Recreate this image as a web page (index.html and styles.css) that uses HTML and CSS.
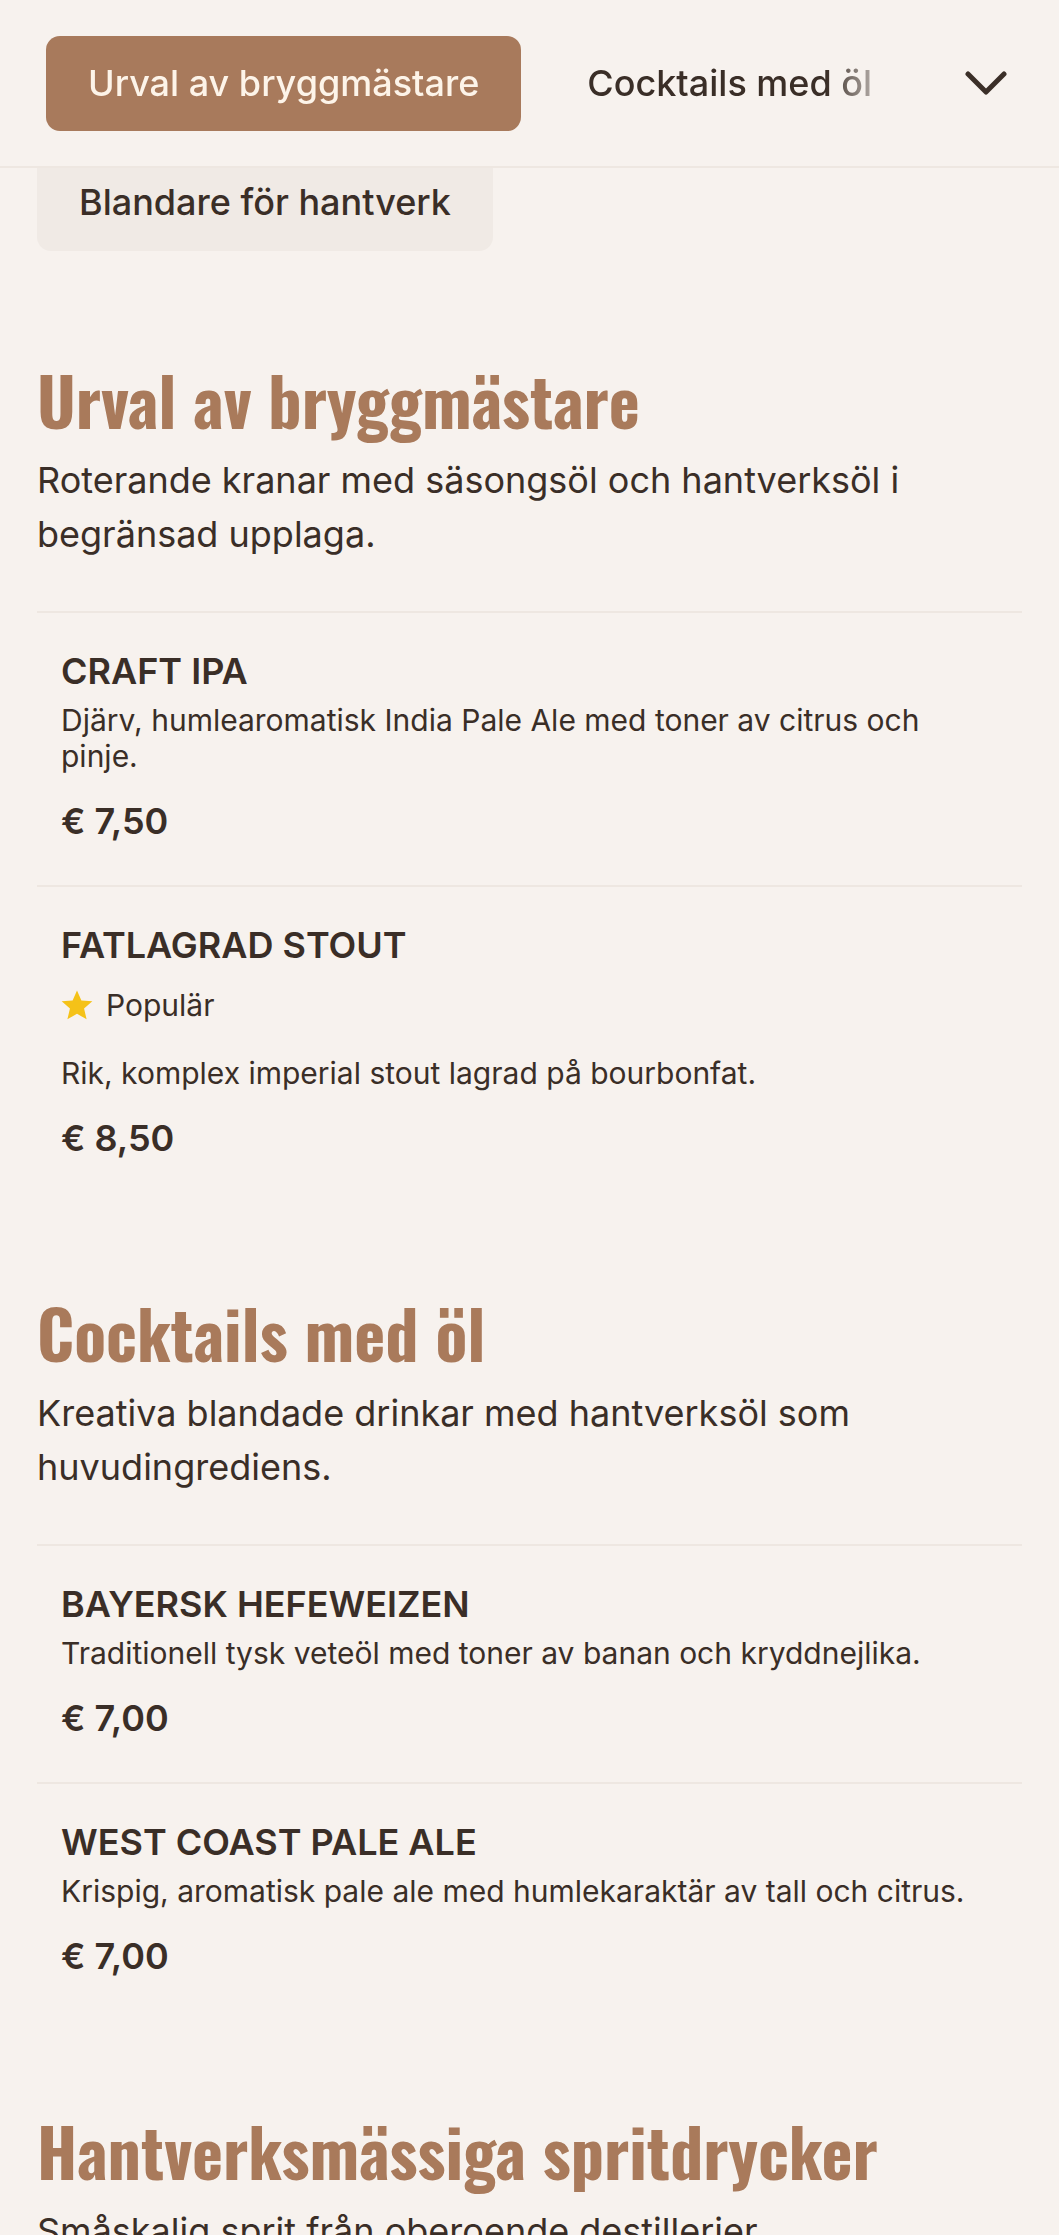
FILE: index.html
```html
<!DOCTYPE html>
<html lang="sv">
<head>
<meta charset="utf-8">
<title>Meny</title>
<link rel="stylesheet" href="styles.css">
</head>
<body>
<header class="topbar">
  <nav class="tabs">
    <a class="tab tab-active">Urval av bryggmästare</a>
    <a class="tab">Cocktails med öl</a>
    <a class="tab">Blandare för hantverk</a>
    <a class="tab">Hantverksmässiga spritdrycker</a>
  </nav>
  <button class="toggle" aria-label="Visa alla kategorier">
    <svg width="42" height="24" viewBox="0 0 42 24"><polyline points="3,3 21,21 39,3" fill="none" stroke="#3b2f28" stroke-width="5" stroke-linecap="round" stroke-linejoin="round"/></svg>
  </button>
</header>
<div class="chiprow">
  <span class="chip">Blandare för hantverk</span>
</div>
<main class="menu">
  <section class="category first">
    <h2 class="cat-title">Urval av bryggmästare</h2>
    <p class="cat-desc">Roterande kranar med säsongsöl och hantverksöl i begränsad upplaga.</p>
    <div class="items">
      <article class="item">
        <h3 class="item-name">CRAFT IPA</h3>
        <p class="item-desc">Djärv, humlearomatisk India Pale Ale med toner av citrus och pinje.</p>
        <p class="item-price">€ 7,50</p>
      </article>
      <article class="item">
        <h3 class="item-name">FATLAGRAD STOUT</h3>
        <div class="badge">
          <svg class="star" width="32" height="31" viewBox="0 0 24 23"><polygon points="12,0.3 15.3,7.7 23.5,8.4 17.3,13.8 19.2,21.9 12,17.6 4.8,21.9 6.7,13.8 0.5,8.4 8.7,7.7" fill="#f5c218"/></svg>
          <span>Populär</span>
        </div>
        <p class="item-desc spaced">Rik, komplex imperial stout lagrad på bourbonfat.</p>
        <p class="item-price">€ 8,50</p>
      </article>
    </div>
  </section>
  <section class="category">
    <h2 class="cat-title">Cocktails med öl</h2>
    <p class="cat-desc">Kreativa blandade drinkar med hantverksöl som huvudingrediens.</p>
    <div class="items">
      <article class="item">
        <h3 class="item-name">BAYERSK HEFEWEIZEN</h3>
        <p class="item-desc">Traditionell tysk veteöl med toner av banan och kryddnejlika.</p>
        <p class="item-price">€ 7,00</p>
      </article>
      <article class="item">
        <h3 class="item-name">WEST COAST PALE ALE</h3>
        <p class="item-desc">Krispig, aromatisk pale ale med humlekaraktär av tall och citrus.</p>
        <p class="item-price">€ 7,00</p>
      </article>
    </div>
  </section>
  <section class="category">
    <h2 class="cat-title">Hantverksmässiga spritdrycker</h2>
    <p class="cat-desc">Småskalig sprit från oberoende destillerier.</p>
    <div class="items">
      <article class="item">
        <h3 class="item-name">SMALL BATCH GIN</h3>
        <p class="item-desc">Botanisk gin med enbär och citrusskal.</p>
        <p class="item-price">€ 9,00</p>
      </article>
    </div>
  </section>
</main>
</body>
</html>
```
FILE: styles.css
```css
* { box-sizing: border-box; }
html, body { margin: 0; padding: 0; }
body {
  background: #f7f2ee;
  color: #3a2e27;
  font-family: Inter, "Noto Sans", sans-serif;
  overflow: hidden;
}
.topbar {
  height: 168px;
  display: flex;
  align-items: center;
  border-bottom: 2px solid #eee7e1;
  background: #f7f2ee;
}
.tabs {
  flex: 1;
  display: flex;
  align-items: center;
  gap: 24px;
  padding-left: 46px;
  overflow: hidden;
  white-space: nowrap;
  -webkit-mask-image: linear-gradient(to right, #000 0, #000 calc(100% - 72px), rgba(0,0,0,0) 100%);
  mask-image: linear-gradient(to right, #000 0, #000 calc(100% - 72px), rgba(0,0,0,0) 100%);
}
.tab {
  flex: none;
  height: 95px;
  display: flex;
  align-items: center;
  padding: 0 42px;
  border-radius: 14px;
  font-size: 36px;
  font-weight: 500;
  color: #3a2e27;
}
.tab-active {
  background: #a87a5c;
  color: #fdf4e9;
}
.toggle {
  flex: none;
  width: 160px;
  height: 95px;
  display: flex;
  align-items: center;
  justify-content: center;
  padding: 0 0 0 14px;
  border: 0;
  background: transparent;
}
.chiprow {
  padding-left: 37px;
}
.chip {
  display: inline-flex;
  align-items: center;
  height: 83px;
  padding: 0 42px 15px 42px;
  background: #f0eae5;
  border-radius: 0 0 14px 14px;
  font-size: 36px;
  font-weight: 500;
  color: #3a2e27;
}
.menu {
  padding: 0 37px;
}
.category {
  padding-top: 90px;
}
.category.first {
  padding-top: 108px;
}
.cat-title {
  margin: 0;
  font-family: Oswald, "Liberation Sans Narrow", "DejaVu Sans Condensed", sans-serif;
  font-weight: 700;
  font-size: 66px;
  line-height: 80px;
  color: #a97a5b;
}
.cat-desc {
  margin: 14px 0 0;
  font-size: 36px;
  line-height: 54px;
  color: #3a2e27;
  max-width: 930px;
}
.items {
  margin-top: 50px;
}
.item {
  border-top: 2px solid #eee7e1;
  padding: 36px 30px 42px 24px;
}
.item-name {
  margin: 0;
  font-size: 36px;
  line-height: 45px;
  font-weight: 600;
  color: #3a2e27;
}
.item-desc {
  margin: 8px 0 0;
  font-size: 30px;
  line-height: 36px;
  color: #3a2e27;
}
.item-desc.spaced {
  margin-top: 32px;
}
.item-price {
  margin: 26px 0 0;
  font-size: 36px;
  line-height: 43px;
  font-weight: 600;
  color: #3a2e27;
}
.badge {
  margin-top: 19px;
  display: flex;
  align-items: center;
  gap: 13px;
  font-size: 30px;
  line-height: 36px;
}
.star {
  flex: none;
  display: block;
}
```
